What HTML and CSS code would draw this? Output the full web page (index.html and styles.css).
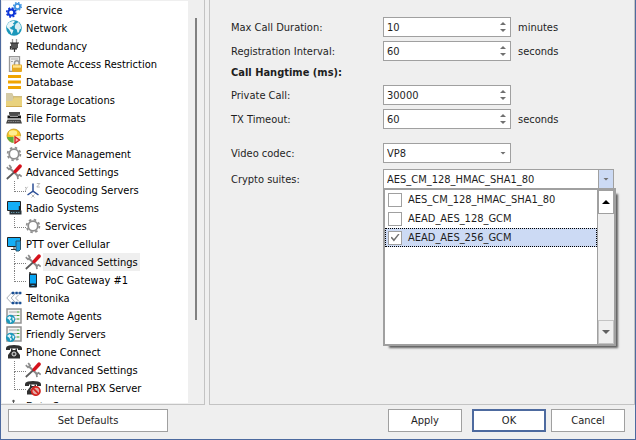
FILE: index.html
```html
<!DOCTYPE html>
<html lang="en">
  <head>
    <meta charset="UTF-8" />
    <meta name="viewport" content="width=device-width, initial-scale=1.0" />
    <link rel="stylesheet" href="styles.css">
    <title>Settings</title>
  </head>
  <body>
    <!-- icon set -->
    <svg class="sprite" aria-hidden="true">
      <symbol id="gears" viewBox="0 0 16 16">
        <g fill="none">
          <circle cx="11.5" cy="4.5" r="2.6" stroke="#3f93e0" stroke-width="1.8"/>
          <circle cx="11.5" cy="4.5" r="3.9" stroke="#3f93e0" stroke-width="1.3" stroke-dasharray="1.6 1.46"/>
          <circle cx="5.2" cy="10.5" r="3" stroke="#0c35d8" stroke-width="2"/>
          <circle cx="5.2" cy="10.5" r="4.5" stroke="#0c35d8" stroke-width="1.6" stroke-dasharray="1.9 1.63"/>
        </g>
      </symbol>
      <symbol id="globe" viewBox="0 0 16 16">
        <circle cx="8" cy="8" r="7.8" fill="#1b98bb"/>
        <path d="M1 5L3 2.2 7.5.8 9 1.8 6.8 3.4 8.4 5 6.4 6 5 7.4 3.6 7 4.6 9 7.4 10 6.8 12 5.6 14.6 4.6 12 3 9.6 1 7.6z" fill="#e8f6f8"/>
        <path d="M9.6 4L12.4 2 14.6 5 15.2 8.4 13.6 9.6 12.8 12.6 11.4 12.6 10.8 9.6 9 8.6 8.8 6.4z" fill="#d9eff3"/>
      </symbol>
      <symbol id="plug" viewBox="0 0 16 16">
        <path d="M6.5 1v4M10.5 1v4" stroke="#999" stroke-width="1.3"/>
        <path d="M5 5h7v4.5L10.5 11h-4L5 9.5z" fill="#555"/>
        <path d="M4 5h9M6 11h5" stroke="#222" stroke-width="1.2"/>
        <path d="M8.5 11v3M4.5 8v3h2" stroke="#333" stroke-width="1.2" fill="none"/>
      </symbol>
      <symbol id="restrict" viewBox="0 0 16 16">
        <path d="M3.5.7h10v14.6h-10z" fill="#f2f2f2" stroke="#999" stroke-width="1.3"/>
        <path d="M5 3h7M5 5.5h2" stroke="#aaa"/>
        <path d="M8.5 9V7a2.3 2.3 0 014.6 0v2" fill="none" stroke="#999" stroke-width="1.4"/>
        <rect x="6" y="8.5" width="10" height="7.5" rx="1" fill="#e6a922"/>
        <path d="M7 10.5h8" stroke="#ffe38f" stroke-width="2.4"/>
      </symbol>
      <symbol id="database" viewBox="0 0 16 16">
        <path d="M2 2.5h13M2 8h13M2 13.5h13" stroke="#f0a500" stroke-width="3"/>
      </symbol>
      <symbol id="folder" viewBox="0 0 16 16">
        <path d="M0 1h6l1.5 3H16v11H0z" fill="#cfbc7e"/>
        <path d="M0 1h6l1 2.5V9H0z" fill="#d5cba6"/>
        <path d="M0 9h6l2-3.5h8V15H0z" fill="#e9d27e"/>
        <path d="M0 14.5h16" stroke="#cfa94c"/>
      </symbol>
      <symbol id="typewriter" viewBox="0 0 16 16">
        <path d="M3 2h11v3H3z" fill="#777"/>
        <path d="M3 3h11M4 5h8" stroke="#222"/>
        <path d="M1.5 5.5h13.5v3H1.5z" fill="#151515"/>
        <path d="M1.5 9.5h13l1.5 4H0z" fill="#444"/>
        <path d="M4 6.5h8M2 9h12" stroke="#bbb" stroke-width=".8"/>
        <path d="M2 11.5h12" stroke="#888" stroke-dasharray="1.5 .8"/>
      </symbol>
      <symbol id="report" viewBox="0 0 16 16">
        <circle cx="7.8" cy="7.8" r="6.8" fill="#f7c522" stroke="#b58a10" stroke-width=".7"/>
        <path d="M1 9a6.8 6.8 0 006.8 5.7V9z" fill="#5fae3c"/>
        <ellipse cx="7" cy="4.9" rx="4.2" ry="2.6" fill="#ffee90"/>
        <path d="M7.5 8h8v8h-8z" fill="#fff" fill-opacity=".6"/>
        <path d="M9 8.8l4.6 3.2L9 15.2z" fill="#f9b0b0" stroke="#d42020" stroke-width="1.3"/>
      </symbol>
      <symbol id="gear" viewBox="0 0 16 16">
        <g fill="none" stroke="#8e8e8e">
          <circle cx="8" cy="8" r="4.8" stroke-width="1.8"/>
          <circle cx="8" cy="8" r="6.4" stroke-width="1.7" stroke-dasharray="2.5 2.526"/>
        </g>
      </symbol>
      <symbol id="tools" viewBox="0 0 16 16">
        <path d="M4 4.5L12.5 12.5" stroke="#8c8c8c" stroke-width="2.2"/>
        <path d="M.8 3.2L3 5.3 5 3.4 3.2 1M12 15.2l-.5-3 2-1.4 2.2 1.8" fill="none" stroke="#8c8c8c" stroke-width="1.7"/>
        <path d="M.8 15L9 7.5" stroke="#5a5a5a" stroke-width="1.7"/>
        <path d="M9.3 7.4L14 2.2" stroke="#d5121c" stroke-width="3.6" stroke-linecap="round"/>
      </symbol>
      <symbol id="axes" viewBox="0 0 16 16">
        <path d="M8 1.5v8M8 9.2L2.5 13M8 9.2l5.5 3.8" stroke="#2c4f96" stroke-width="1.5" fill="none"/>
        <path d="M11.8 1.5h3l-3 3.5h3M0 4.8l1.3 1.8 1.3-1.8M1.3 6.6L.4 8.8M6.5 12.5l3 3M9.5 12.5l-3 3" stroke="#b0b0b0" stroke-width=".9" fill="none"/>
      </symbol>
      <symbol id="radio" viewBox="0 0 16 16">
        <path d="M1.5 1.5h13v9h-13z" fill="#14aef5" stroke="#222"/>
        <path d="M4 13.5h4M6.5 11v2" stroke="#333"/>
        <path d="M3.5 10.5h12v4h-12z" fill="#2a3338"/>
        <path d="M13.5 6v5" stroke="#222" stroke-width="1.4"/>
        <path d="M5 12.5h4M10 12.5h4" stroke="#6c9cae" stroke-dasharray="1 .8"/>
      </symbol>
      <symbol id="ptt" viewBox="0 0 16 16">
        <path d="M1.5 1.5h13v9h-13z" fill="#14aef5" stroke="#222"/>
        <path d="M5 13.5h5M8 11v2" stroke="#333"/>
        <path d="M10 5h4.5v8.5l-1.5 1.5H10z" fill="#1f9fe0" stroke="#2b5670"/>
      </symbol>
      <symbol id="handset" viewBox="0 0 16 16">
        <path d="M5 0v3" stroke="#222" stroke-width="1.4"/>
        <rect x="4" y="1.5" width="8" height="14" rx="1" fill="#1d2730"/>
        <path d="M5 3h6v8.5H5z" fill="#08a4f2"/>
        <path d="M6.5 13.5h3" stroke="#3aa0d8"/>
      </symbol>
      <symbol id="teltonika" viewBox="0 0 16 16">
        <path d="M5.5 3L.8 8l4.7 5M9 4L5.2 8 9 12M13 4.5L9.5 8l3.5 3.5" stroke="#9da4ab" fill="none" stroke-width=".9"/>
        <path d="M5 3h10.5M5 13h10.5" stroke="#245391" stroke-width="1"/>
        <path d="M6 3h9.5M6 13h9.5" stroke="#174d93" stroke-width="2.6" stroke-dasharray="2 1.6"/>
      </symbol>
      <symbol id="server" viewBox="0 0 16 16">
        <path d="M1 1h14v14H1z" fill="#f4f4f4" stroke="#929292" stroke-width="1.5"/>
        <path d="M3 4h8M3 7.5h8M9 11h2" stroke="#a8a8a8"/>
        <path d="M11 4h2.4M11 7.5h2.4M11 11h2.4" stroke="#36a22c" stroke-width="1.1"/>
        <circle cx="4.6" cy="11.4" r="4.6" fill="#1b98bb"/>
        <path d="M1 10l2.5-2 2 1.6L4 11.4 6 13l-1.5 2-1-3zM6.4 9l2 1.4L7.4 13l-1-1.6z" fill="#e4f4f8"/>
      </symbol>
      <symbol id="phone" viewBox="0 0 16 16">
        <path d="M0 6V4q0-2 3-2.6 5-1 10 0 3 .6 3 2.6v2h-4V4.4H4V6z" fill="#303030"/>
        <path d="M5 4.5h1.5V6h3V4.5H11V7l3 4v3.5H2V11l3-4z" fill="#303030"/>
        <circle cx="8" cy="10" r="2" fill="#444" stroke="#e5e5e5"/>
      </symbol>
      <symbol id="pbx" viewBox="0 0 16 16">
        <use href="#phone"/>
        <circle cx="10.8" cy="11" r="4.2" fill="#e5aaa5" stroke="#d32420" stroke-width="1.7"/>
        <path d="M8 8.2l5.6 5.6" stroke="#d32420" stroke-width="1.7"/>
      </symbol>
      <symbol id="antenna" viewBox="0 0 16 16">
        <path d="M7.5 3v12M7.5 6L10 8.5" stroke="#555" fill="none"/>
        <circle cx="7.5" cy="3" r="1.2" fill="#555"/>
      </symbol>
    </svg>

    <main class="panels">
      <nav class="sidebar">
        <ul class="tree">
          <li><a href="#"><svg><use href="#gears"/></svg><span>Service</span></a></li>
          <li><a href="#"><svg><use href="#globe"/></svg><span>Network</span></a></li>
          <li><a href="#"><svg><use href="#plug"/></svg><span>Redundancy</span></a></li>
          <li><a href="#"><svg><use href="#restrict"/></svg><span>Remote Access Restriction</span></a></li>
          <li><a href="#"><svg><use href="#database"/></svg><span>Database</span></a></li>
          <li><a href="#"><svg><use href="#folder"/></svg><span>Storage Locations</span></a></li>
          <li><a href="#"><svg><use href="#typewriter"/></svg><span>File Formats</span></a></li>
          <li><a href="#"><svg><use href="#report"/></svg><span>Reports</span></a></li>
          <li><a href="#"><svg><use href="#gear"/></svg><span>Service Management</span></a></li>
          <li>
            <a href="#"><svg><use href="#tools"/></svg><span>Advanced Settings</span></a>
            <ul>
              <li><a href="#"><svg><use href="#axes"/></svg><span>Geocoding Servers</span></a></li>
            </ul>
          </li>
          <li>
            <a href="#"><svg><use href="#radio"/></svg><span>Radio Systems</span></a>
            <ul>
              <li><a href="#"><svg><use href="#gear"/></svg><span>Services</span></a></li>
            </ul>
          </li>
          <li>
            <a href="#"><svg><use href="#ptt"/></svg><span>PTT over Cellular</span></a>
            <ul>
              <li><a href="#" class="selected"><svg><use href="#tools"/></svg><span>Advanced Settings</span></a></li>
              <li><a href="#"><svg><use href="#handset"/></svg><span>PoC Gateway #1</span></a></li>
            </ul>
          </li>
          <li><a href="#"><svg><use href="#teltonika"/></svg><span>Teltonika</span></a></li>
          <li><a href="#"><svg><use href="#server"/></svg><span>Remote Agents</span></a></li>
          <li><a href="#"><svg><use href="#server"/></svg><span>Friendly Servers</span></a></li>
          <li>
            <a href="#"><svg><use href="#phone"/></svg><span>Phone Connect</span></a>
            <ul>
              <li><a href="#"><svg><use href="#tools"/></svg><span>Advanced Settings</span></a></li>
              <li><a href="#"><svg><use href="#pbx"/></svg><span>Internal PBX Server</span></a></li>
            </ul>
          </li>
          <li><a href="#"><svg><use href="#antenna"/></svg><span>Data Sources</span></a></li>
        </ul>
        <div class="scrollTrack"><div class="scrollThumb"></div></div>
      </nav>

      <form class="content" id="settings">
        <div class="row">
          <label for="maxCall">Max Call Duration:</label>
          <div class="spin">
            <input id="maxCall" type="number" value="10" />
            <div class="arrows">
              <button type="button" class="up" aria-label="Increase"></button>
              <button type="button" class="down" aria-label="Decrease"></button>
            </div>
          </div>
          <span>minutes</span>
        </div>
        <div class="row">
          <label for="regInterval">Registration Interval:</label>
          <div class="spin">
            <input id="regInterval" type="number" value="60" />
            <div class="arrows">
              <button type="button" class="up" aria-label="Increase"></button>
              <button type="button" class="down" aria-label="Decrease"></button>
            </div>
          </div>
          <span>seconds</span>
        </div>
        <h2>Call Hangtime (ms):</h2>
        <div class="row">
          <label for="privateCall">Private Call:</label>
          <div class="spin">
            <input id="privateCall" type="number" value="30000" />
            <div class="arrows">
              <button type="button" class="up" aria-label="Increase"></button>
              <button type="button" class="down" aria-label="Decrease"></button>
            </div>
          </div>
        </div>
        <div class="row">
          <label for="txTimeout">TX Timeout:</label>
          <div class="spin">
            <input id="txTimeout" type="number" value="60" />
            <div class="arrows">
              <button type="button" class="up" aria-label="Increase"></button>
              <button type="button" class="down" aria-label="Decrease"></button>
            </div>
          </div>
          <span>seconds</span>
        </div>
        <div class="row codecRow">
          <label for="codec">Video codec:</label>
          <div class="selectBox">
            <select id="codec">
              <option>VP8</option>
            </select>
          </div>
        </div>
        <div class="row cryptoRow">
          <label for="crypto">Crypto suites:</label>
          <div class="combo">
            <input id="crypto" type="text" value="AES_CM_128_HMAC_SHA1_80" readonly />
            <button type="button" class="comboBtn" aria-label="Open list"></button>
            <div class="popup">
              <div class="options">
                <label><input type="checkbox" />AES_CM_128_HMAC_SHA1_80</label>
                <label><input type="checkbox" />AEAD_AES_128_GCM</label>
                <label class="active"><input type="checkbox" checked />AEAD_AES_256_GCM</label>
              </div>
              <div class="popupScroll">
                <button type="button" class="scrollUp" aria-label="Scroll up"></button>
                <button type="button" class="scrollDown" aria-label="Scroll down"></button>
              </div>
            </div>
          </div>
        </div>
      </form>
    </main>

    <footer class="buttons">
      <button type="button" class="btn defaults">Set Defaults</button>
      <button type="button" class="btn apply">Apply</button>
      <button type="submit" form="settings" class="btn ok">OK</button>
      <button type="button" class="btn cancel">Cancel</button>
    </footer>
  </body>
</html>
```

FILE: styles.css
```css
* {
  box-sizing: border-box;
}

body,
input,
select,
button {
  font-family: "DejaVu Sans Condensed", "DejaVu Sans", sans-serif;
  font-stretch: condensed;
  font-size: 11px;
  color: #1e1e1e;
}

body {
  display: flex;
  flex-direction: column;
  height: 100vh;
  margin: 0;
  border: 1px solid #4d6a9f;
  border-top: none;
  background-color: #efefef;
  overflow: hidden;
}

.sprite {
  display: none;
}

.panels {
  display: flex;
  flex: 1;
  gap: 4px;
  min-height: 0;
}

/* tree */
.sidebar {
  display: flex;
  width: 204px;
  padding: 1px 0 1px 1px;
  border-right: 1px solid #c3c3c3;
  border-bottom: 1px solid #c3c3c3;
}

.tree {
  flex: 1;
  padding-left: 4px;
  overflow: hidden;
  background-color: white;
}

.sidebar ul {
  margin: 0;
  list-style: none;
}

.tree ul {
  padding-left: 19px;
}

.tree ul li {
  position: relative;
}

.tree ul li::before {
  content: "";
  position: absolute;
  left: -11px;
  top: 0;
  width: 11px;
  height: 10px;
  border-left: 1px dotted #808080;
  border-bottom: 1px dotted #808080;
}

.tree ul li:not(:last-child)::after {
  content: "";
  position: absolute;
  left: -11px;
  top: 10px;
  height: 8px;
  border-left: 1px dotted #808080;
}

.tree a {
  display: flex;
  align-items: center;
  gap: 2px;
  height: 18px;
  color: black;
  text-decoration: none;
  white-space: nowrap;
}

.tree svg {
  width: 16px;
  height: 16px;
}

.tree span {
  height: 18px;
  padding: 0 2px;
  line-height: 20px;
}

.selected span {
  background-color: #efefef;
}

.scrollTrack {
  display: flex;
  justify-content: center;
  width: 16px;
}

.scrollThumb {
  width: 2px;
  height: 75%;
  margin-top: 17px;
  background-color: #808080;
}

/* form */
.content {
  display: flex;
  flex: 1;
  flex-direction: column;
  gap: 4px;
  padding: 17px 20px 0 21px;
  border: 1px solid #c3c3c3;
  border-top: none;
}

.row {
  display: grid;
  grid-template-columns: 152px 128px auto;
  align-items: center;
  height: 20px;
}

.row > span {
  padding-left: 7px;
}

h2 {
  height: 16px;
  margin: 0;
  font-size: 11px;
  line-height: 16px;
}

.spin,
.selectBox,
.combo {
  position: relative;
  display: flex;
  height: 20px;
  border: 1px solid #a0a0a0;
  background-color: white;
}

.spin input,
.combo > input {
  flex: 1;
  min-width: 0;
  padding: 0 3px;
  border: none;
  outline: none;
  background: none;
}

.spin input {
  appearance: textfield;
}

.spin input::-webkit-inner-spin-button {
  display: none;
}

.arrows {
  display: flex;
  flex-direction: column;
  justify-content: space-between;
  width: 14px;
  padding: 4px;
}

.arrows button {
  width: 6px;
  height: 3px;
  padding: 0;
  border: none;
  background-color: #707070;
}

.up {
  clip-path: polygon(50% 0, 100% 100%, 0 100%);
}

.down {
  clip-path: polygon(0 0, 100% 0, 50% 100%);
}

.codecRow {
  margin-top: 10px;
}

.cryptoRow {
  grid-template-columns: 152px minmax(0, 231px);
  margin-top: 2px;
}

.selectBox select {
  flex: 1;
  min-width: 0;
  appearance: none;
  padding: 0 3px;
  border: none;
  background: none;
}

.selectBox::after,
.comboBtn::before {
  content: "";
  flex: none;
  width: 6px;
  height: 3px;
  background-color: #707070;
  clip-path: polygon(0 0, 100% 0, 50% 100%);
}

.selectBox::after {
  align-self: center;
  margin-right: 4px;
}

.comboBtn {
  display: flex;
  align-items: center;
  justify-content: center;
  width: 15px;
  padding: 0;
  border: none;
  border-left: 1px solid #a0a0a0;
  background-color: #ccdaf4;
}

.popup {
  position: absolute;
  top: 18px;
  left: -1px;
  right: -3px;
  display: flex;
  height: 158px;
  border: 2px solid #a0a0a0;
  background-color: white;
  box-shadow: 4px 4px 2px -2px #606060;
}

.options {
  flex: 1;
}

.options label {
  display: flex;
  align-items: center;
  gap: 6px;
  height: 19px;
  padding-left: 2px;
  border: 1px solid transparent;
}

.options .active {
  border: 1px dotted black;
  background-color: #ccdaf4;
}

.options input {
  appearance: none;
  display: grid;
  place-items: center;
  width: 14px;
  height: 14px;
  margin: 0;
  border: 1px solid #a0a0a0;
  background-color: white;
}

.options input:checked::before {
  content: "";
  width: 9px;
  height: 8px;
  background-color: #707070;
  clip-path: polygon(0 50%, 15% 40%, 38% 68%, 88% 0, 100% 10%, 38% 100%);
}

.popupScroll {
  display: flex;
  flex-direction: column;
  justify-content: space-between;
  width: 17px;
  border-left: 1px solid #a0a0a0;
  background-color: #efefef;
}

.popupScroll button {
  display: grid;
  place-items: center;
  height: 24px;
  padding: 0;
  border: 1px solid #c3c3c3;
  background-color: #efefef;
}

.popupScroll button::before {
  content: "";
  width: 8px;
  height: 4px;
  background-color: #606060;
  clip-path: polygon(0 0, 100% 0, 50% 100%);
}

.popupScroll .scrollUp {
  border-color: #a0a0a0;
  background-color: white;
}

.popupScroll .scrollUp::before {
  background-color: black;
  clip-path: polygon(50% 0, 100% 100%, 0 100%);
}

/* bottom buttons */
.buttons {
  display: flex;
  padding: 4px 10px 7px 7px;
}

.btn {
  width: 74px;
  height: 23px;
  padding: 0;
  border: 1px solid #a0a0a0;
  background-color: white;
}

.defaults {
  width: 160px;
  margin-right: auto;
}

.ok {
  margin: 0 5px 0 10px;
  border: 2px solid #4d6a9f;
}
```
